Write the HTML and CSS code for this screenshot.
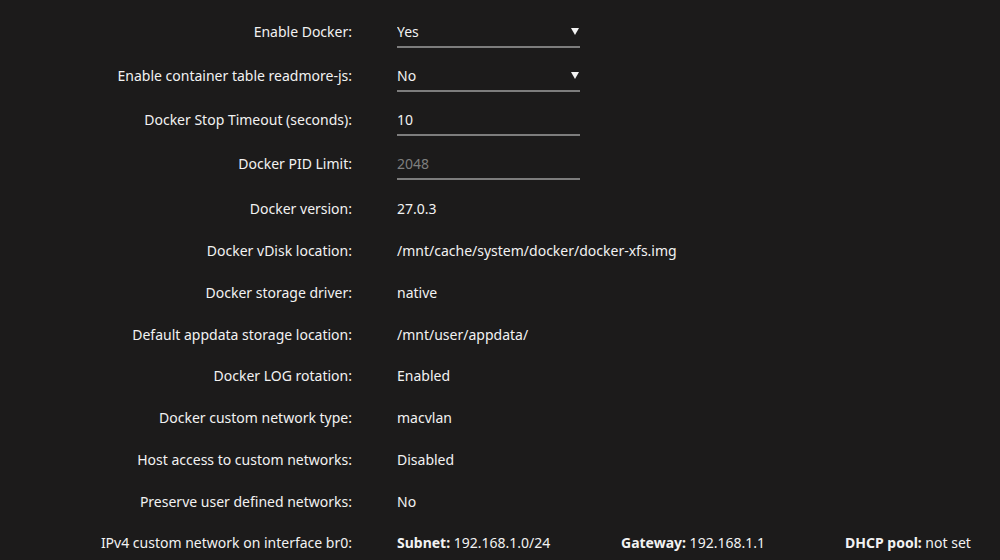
FILE: index.html
```html
<!DOCTYPE html>
<html lang="en">
<head>
  <meta charset="UTF-8">
  <title>Docker Settings</title>
  <link rel="stylesheet" href="styles.css">
</head>
<body>

  <form class="settings">
    <div class="row field">
      <label for="enable">Enable Docker:</label>
      <div class="value">
        <select id="enable" class="input select">
          <option>Yes</option>
          <option>No</option>
        </select>
      </div>
    </div>

    <div class="row field">
      <label for="readmore">Enable container table readmore-js:</label>
      <div class="value">
        <select id="readmore" class="input select">
          <option>No</option>
          <option>Yes</option>
        </select>
      </div>
    </div>

    <div class="row field">
      <label for="timeout">Docker Stop Timeout (seconds):</label>
      <div class="value">
        <input id="timeout" class="input" type="text" value="10">
      </div>
    </div>

    <div class="row field">
      <label for="pids">Docker PID Limit:</label>
      <div class="value">
        <input id="pids" class="input" type="text" placeholder="2048">
      </div>
    </div>

    <div class="info">
      <div class="row">
        <span class="label">Docker version:</span>
        <span class="value">27.0.3</span>
      </div>
      <div class="row">
        <span class="label">Docker vDisk location:</span>
        <span class="value">/mnt/cache/system/docker/docker-xfs.img</span>
      </div>
      <div class="row">
        <span class="label">Docker storage driver:</span>
        <span class="value">native</span>
      </div>
      <div class="row">
        <span class="label">Default appdata storage location:</span>
        <span class="value">/mnt/user/appdata/</span>
      </div>
      <div class="row">
        <span class="label">Docker LOG rotation:</span>
        <span class="value">Enabled</span>
      </div>
      <div class="row">
        <span class="label">Docker custom network type:</span>
        <span class="value">macvlan</span>
      </div>
      <div class="row">
        <span class="label">Host access to custom networks:</span>
        <span class="value">Disabled</span>
      </div>
      <div class="row">
        <span class="label">Preserve user defined networks:</span>
        <span class="value">No</span>
      </div>
      <div class="row network">
        <span class="label">IPv4 custom network on interface br0:</span>
        <span class="value net-info">
          <span><b>Subnet:</b> 192.168.1.0/24</span>
          <span><b>Gateway:</b> 192.168.1.1</span>
          <span><b>DHCP pool:</b> not set</span>
        </span>
      </div>
    </div>
  </form>

</body>
</html>
```

FILE: styles.css
```css
body {
  margin: 0;
  background: #1c1b1b;
  color: #f2f2f2;
  font-family: 'Noto Sans', sans-serif;
  font-size: 14px;
}

.settings {
  padding-top: 9px;
}

.row {
  display: grid;
  grid-template-columns: 352px 1fr;
  column-gap: 45px;
  align-items: center;
}

.row label,
.row .label {
  text-align: right;
}

.field {
  height: 44px;
}

.field .value {
  align-self: start;
  padding-top: 7px;
}

.input {
  display: block;
  box-sizing: content-box;
  width: 183px;
  height: 30px;
  padding: 0;
  margin: 0;
  border: none;
  border-bottom: 2px solid #7d7d7d;
  background: transparent;
  color: #f2f2f2;
  font: inherit;
  outline: none;
}

.input::placeholder {
  color: #7f7f7f;
}

.select {
  appearance: none;
  -webkit-appearance: none;
  background-image: url("data:image/svg+xml,%3Csvg xmlns='http://www.w3.org/2000/svg' width='8' height='7'%3E%3Cpath d='M0 0h8L4 7z' fill='%23f2f2f2'/%3E%3C/svg%3E");
  background-repeat: no-repeat;
  background-position: right 1px center;
}

.info {
  padding-top: 3px;
}

.info .row {
  height: 41.75px;
}

.net-info {
  display: grid;
  grid-template-columns: 224px 224px auto;
}

.net-info b {
  font-weight: bold;
}
```
